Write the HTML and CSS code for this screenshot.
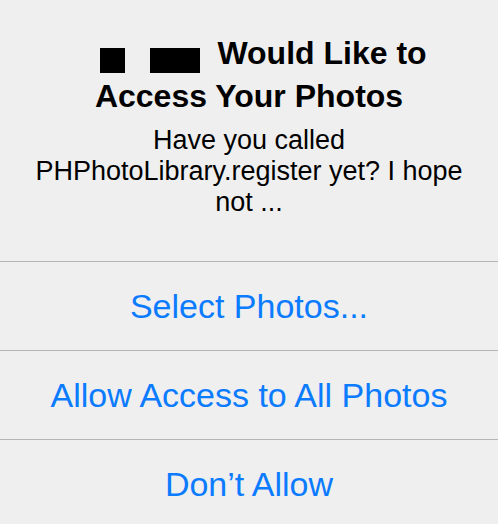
FILE: index.html
```html
<!DOCTYPE html>
<html lang="en">
<head>
  <meta charset="UTF-8" />
  <meta name="viewport" content="width=device-width, initial-scale=1.0"/>
  <title>Photo Access</title>
  <link rel="stylesheet" href="styles.css">
</head>
<body>

  <div class="alert">
    <div class="alert-head">
      <h2 class="alert-title">
        <span class="redact redact-short"></span><span class="redact redact-long"></span>Would Like to Access Your Photos
      </h2>
      <p class="alert-msg">Have you called PHPhotoLibrary.register yet? I hope not ...</p>
    </div>

    <!-- actions -->
    <button class="alert-btn">Select Photos...</button>
    <button class="alert-btn">Allow Access to All Photos</button>
    <button class="alert-btn">Don’t Allow</button>
  </div>

</body>
</html>
```

FILE: styles.css
```css
html, body {
  margin: 0;
  height: 100%;
  overflow: hidden;
}

body {
  background-color: rgb(239, 239, 239);
  font-family: "Liberation Sans", Arial, sans-serif;
  color: black;
}

.alert {
  width: 498px;
}

.alert-head {
  padding: 32px 30px 43px;
  text-align: center;
}

.alert-title {
  margin: 0;
  font-size: 32px;
  font-weight: bold;
  line-height: 43px;
}

.redact {
  display: inline-block;
  height: 25px;
  background-color: black;
  vertical-align: -9px;
}

.redact-short {
  width: 25px;
  margin-left: 29px;
  margin-right: 25px;
}

.redact-long {
  position: relative;
  width: 50px;
  margin-right: 17px;
}

/* faint dot texture on the right of the long block */
.redact-long::after {
  content: "";
  position: absolute;
  top: 4px;
  right: 3px;
  width: 20px;
  height: 18px;
  background-image: radial-gradient(circle, rgba(110, 110, 110, 0.55) 0.5px, transparent 0.7px);
  background-size: 4px 4px;
}

.alert-msg {
  margin: 7px 0 0;
  font-size: 27px;
  line-height: 31px;
}

.alert-btn {
  display: block;
  width: 100%;
  height: 89px;
  margin: 0;
  padding: 0;
  border: none;
  border-top: 1px solid rgb(181, 181, 181);
  background: none;
  font-family: "Liberation Sans", Arial, sans-serif;
  font-size: 34px;
  color: rgb(11, 123, 255);
  text-align: center;
  cursor: pointer;
}
```
